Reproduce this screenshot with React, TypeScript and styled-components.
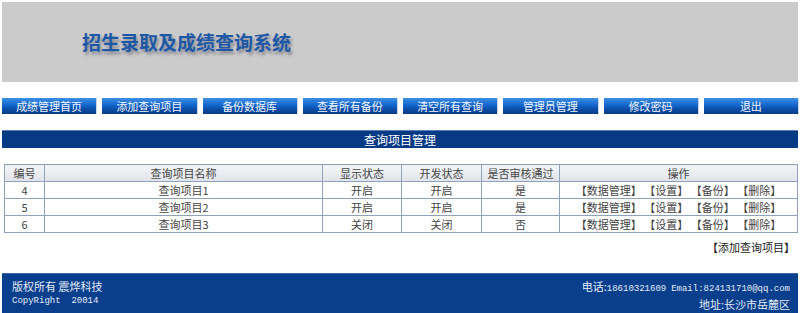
import React from "react"
import styled, { createGlobalStyle } from "styled-components"

const GlobalStyle = createGlobalStyle`
  body {
    margin: 0;
    background: #fff;
    font-family: "Noto Sans CJK SC", "Liberation Sans", sans-serif;
  }
`

const Page = styled.div`
  padding: 2px 2px 0 2px;
  display: flex;
  flex-direction: column;
`

const Header = styled.div`
  height: 80px;
  background: #cbcbcb;
  display: flex;
  align-items: center;
  padding-left: 80px;
`

const Title = styled.h1`
  margin: 0 0 1px 0;
  font-size: 19px;
  font-weight: bold;
  color: #1d58a6;
  text-shadow: 2px 3px 3px rgba(60, 60, 80, 0.45);
`

const Nav = styled.div`
  display: flex;
  gap: 6px;
  margin-top: 16px;
`

const NavButton = styled.a`
  flex: 1;
  height: 16px;
  line-height: 16px;
  text-align: center;
  font-size: 11px;
  color: #f2f6fc;
  background: linear-gradient(#3b8fe4 0%, #1466cc 45%, #0b4ea8 70%, #093b86 100%);
  box-shadow: 1px 0 0 #c8d4e4;
  cursor: pointer;
`

const SectionBar = styled.div`
  margin-top: 16px;
  height: 17px;
  line-height: 17px;
  background: #073a85;
  border-top: 1px solid #5a7fb8;
  color: #fff;
  font-size: 12px;
  text-align: center;
`

const Table = styled.table`
  margin: 16px 0 0 2px;
  width: calc(100% - 2px);
  border-collapse: collapse;
  font-size: 11px;
  color: #444;
  border: 1px solid #6f88a6;

  th,
  td {
    border: 1px solid #8ea3bb;
    height: 16px;
    padding: 0;
    text-align: center;
    font-weight: normal;
    line-height: 16px;
  }

  th {
    background: linear-gradient(#f4f5f7, #dfe4ea);
  }
`

const AddLink = styled.div`
  text-align: right;
  font-size: 11px;
  color: #222;
  margin-top: 7px;
  padding-right: 3px;
  line-height: 14px;
`

const Footer = styled.div`
  margin-top: 19px;
  height: 42px;
  background: #0a3f8e;
  border-top: 1px solid #3d69a8;
  color: #e4ecf6;
  font-size: 11px;
  display: flex;
  justify-content: space-between;
  padding: 6px 8px 0 10px;
  box-sizing: border-box;
`

const FooterCol = styled.div<{ right?: boolean }>`
  display: flex;
  flex-direction: column;
  gap: 2px;
  align-items: ${(p) => (p.right ? "flex-end" : "flex-start")};
  line-height: 13px;
`

const Mono = styled.span`
  font-family: "Liberation Mono", "Noto Sans CJK SC", monospace;
  font-size: 9px;
`

const navItems = [
  "成绩管理首页",
  "添加查询项目",
  "备份数据库",
  "查看所有备份",
  "清空所有查询",
  "管理员管理",
  "修改密码",
  "退出",
]

const rows = [
  { id: 4, name: "查询项目1", show: "开启", open: "开启", pass: "是" },
  { id: 5, name: "查询项目2", show: "开启", open: "开启", pass: "是" },
  { id: 6, name: "查询项目3", show: "关闭", open: "关闭", pass: "否" },
]

const App = () => {
  return (
    <Page>
      <GlobalStyle />
      <Header>
        <Title>招生录取及成绩查询系统</Title>
      </Header>
      <Nav>
        {navItems.map((item) => (
          <NavButton key={item}>{item}</NavButton>
        ))}
      </Nav>
      <SectionBar>查询项目管理</SectionBar>
      <Table>
        <colgroup>
          <col style={{ width: 40 }} />
          <col style={{ width: 278 }} />
          <col style={{ width: 79 }} />
          <col style={{ width: 80 }} />
          <col style={{ width: 78 }} />
          <col />
        </colgroup>
        <thead>
          <tr>
            <th>编号</th>
            <th>查询项目名称</th>
            <th>显示状态</th>
            <th>开发状态</th>
            <th>是否审核通过</th>
            <th>操作</th>
          </tr>
        </thead>
        <tbody>
          {rows.map((r) => (
            <tr key={r.id}>
              <td>{r.id}</td>
              <td>{r.name}</td>
              <td>{r.show}</td>
              <td>{r.open}</td>
              <td>{r.pass}</td>
              <td>【数据管理】 【设置】 【备份】 【删除】</td>
            </tr>
          ))}
        </tbody>
      </Table>
      <AddLink>【添加查询项目】</AddLink>
      <Footer>
        <FooterCol>
          <span>版权所有 震烨科技</span>
          <Mono>CopyRight&nbsp;&nbsp;20014</Mono>
        </FooterCol>
        <FooterCol right>
          <span>
            电话:<Mono>18610321609</Mono>&nbsp;&nbsp;<Mono>Email:824131710@qq.com</Mono>
          </span>
          <span>地址:长沙市岳麓区</span>
        </FooterCol>
      </Footer>
    </Page>
  )
}

export default App
